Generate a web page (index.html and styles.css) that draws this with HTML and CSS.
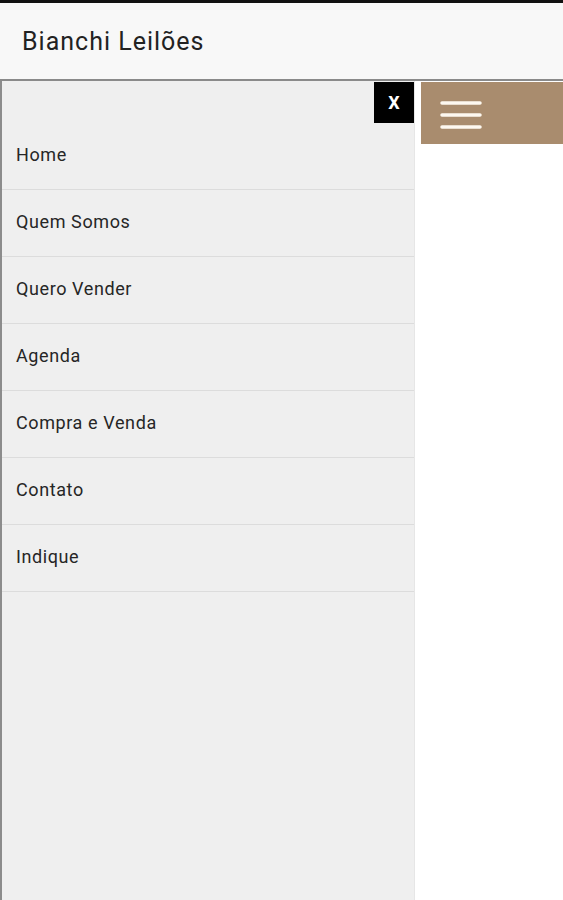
FILE: index.html
```html
<!DOCTYPE html>
<html lang="pt-BR">
<head>
  <meta charset="utf-8" />
  <meta name="viewport" content="width=device-width, initial-scale=1" />
  <title>Bianchi Leilões</title>
  <link rel="stylesheet" href="styles.css">
</head>
<body>
  <header class="topbar">
    <h1>Bianchi Leilões</h1>
  </header>
  <div class="main">
    <nav class="drawer">
      <div class="drawer-head">
        <button class="close" type="button">X</button>
      </div>
      <ul class="menu">
        <li><a href="#">Home</a></li>
        <li><a href="#">Quem Somos</a></li>
        <li><a href="#">Quero Vender</a></li>
        <li><a href="#">Agenda</a></li>
        <li><a href="#">Compra e Venda</a></li>
        <li><a href="#">Contato</a></li>
        <li><a href="#">Indique</a></li>
      </ul>
    </nav>
    <div class="content">
      <button class="burger" type="button" aria-label="menu">
        <svg width="42" height="30" viewBox="0 0 42 30">
          <path d="M2 3H40M2 15H40M2 27H40" stroke="#fdf8f0" stroke-width="3.5" stroke-linecap="round" fill="none"/>
        </svg>
      </button>
    </div>
  </div>
</body>
</html>
```

FILE: styles.css
```css
html, body { height:100%; }
body { margin:0; font-family:Roboto, "Liberation Sans", sans-serif; background:#fff; color:#222; display:flex; flex-direction:column; }

.topbar {
  height:81px; box-sizing:border-box; background:#f8f8f8;
  border-top:3px solid #111; border-bottom:2px solid #8a8a8a;
  display:flex; align-items:center; padding-left:22px;
}
.topbar h1 { margin:0; font-size:25px; font-weight:400; letter-spacing:1px; color:#222; }

.main { flex:1; display:flex; }

.drawer {
  width:412px; background:#efefef;
  border-left:2px solid #8c8c8c;
  border-right:1px solid #e6e6e6;
}
.drawer-head { display:flex; justify-content:flex-end; padding-top:1px; }
.close {
  width:40px; height:41px; background:#000; color:#fff;
  border:none; font:700 18px Roboto, "Liberation Sans", sans-serif;
  cursor:pointer; padding:0;
}

.menu { list-style:none; margin:0; padding:0; }
.menu li { height:66px; box-sizing:border-box; padding-bottom:3px; border-bottom:1px solid #dcdcdc; display:flex; align-items:center; height:67px; }
.menu a { padding-left:14px; font-size:18px; letter-spacing:0.6px; color:#262626; text-decoration:none; }

.content { flex:1; padding-top:1px; padding-left:6px; }
.burger {
  width:100%; height:62px; background:#a98c6e;
  border:none; padding:3px 0 0 19px; cursor:pointer;
  display:flex; align-items:center;
}
.burger svg { display:block; }
```
